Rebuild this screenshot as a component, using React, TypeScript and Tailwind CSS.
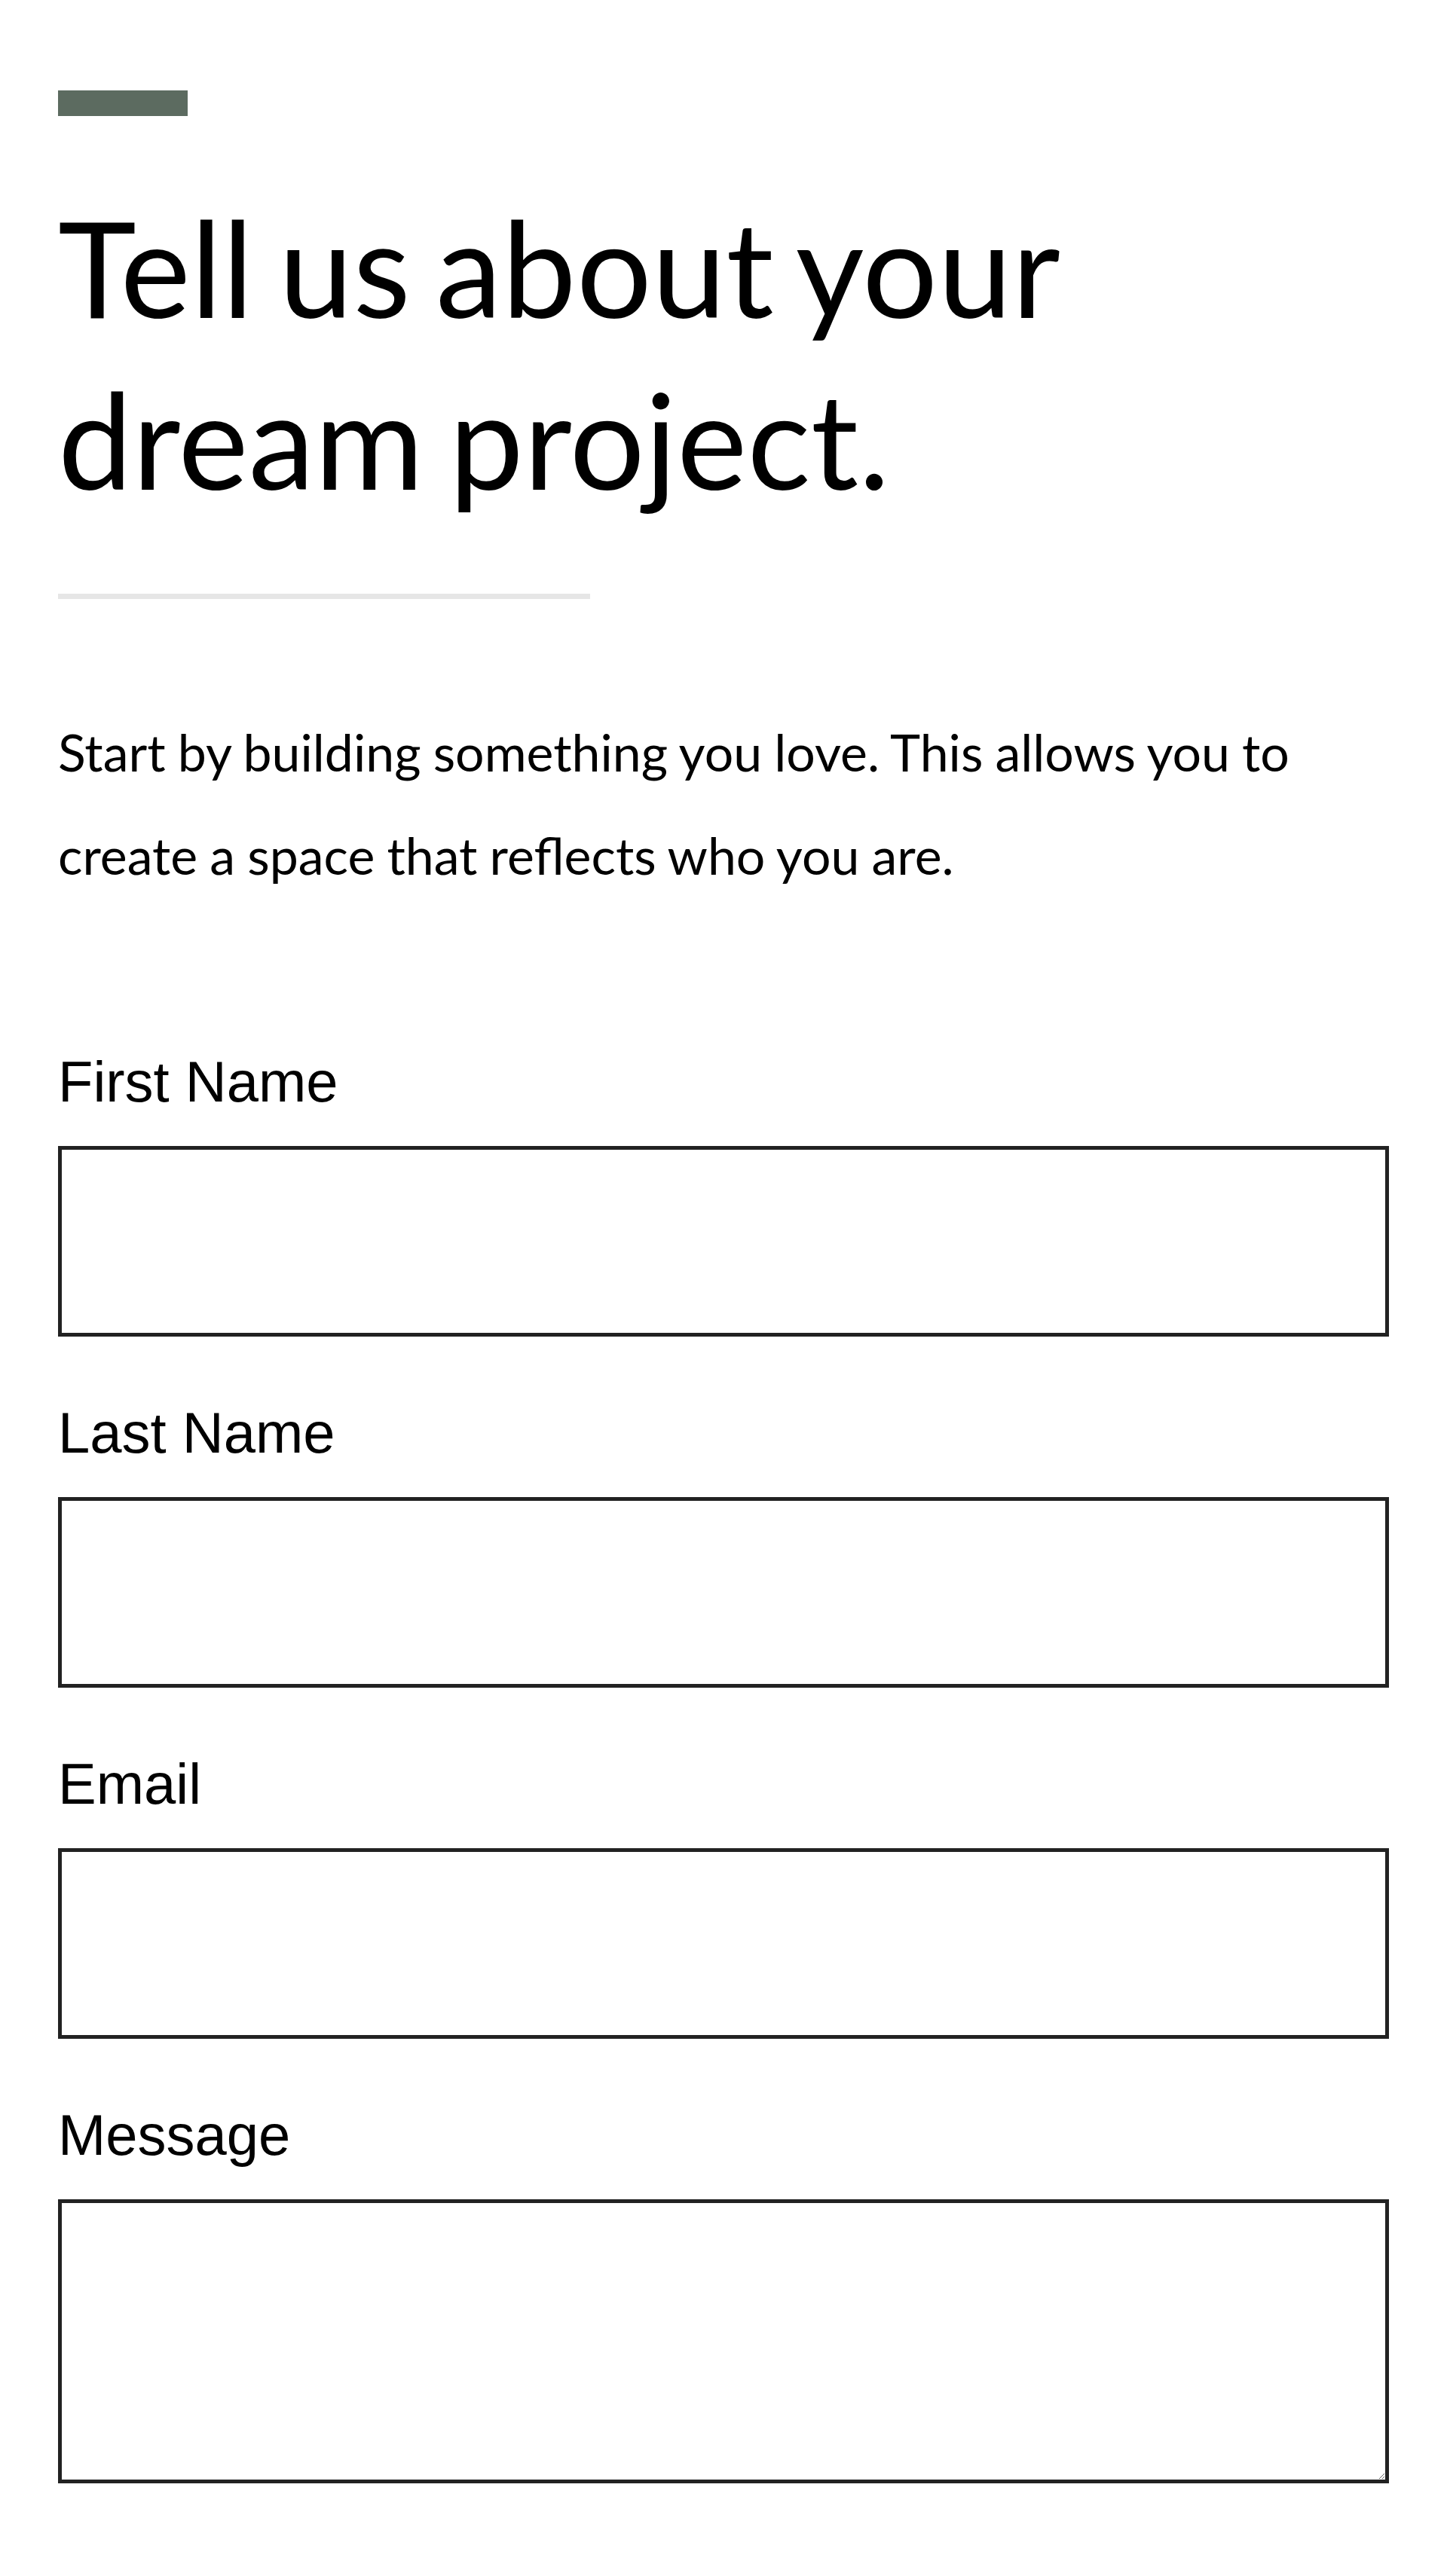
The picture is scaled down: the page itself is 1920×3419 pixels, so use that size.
export default function App() {
  const fields = [
    { label: "First Name", id: "first", type: "text" },
    { label: "Last Name", id: "last", type: "text" },
    { label: "Email", id: "email", type: "email" },
  ];

  return (
    <div className="bg-white min-h-screen px-[77px] pt-[120px] pb-[123px] text-black">
      {/* Accent bar */}
      <div className="w-[172px] h-[34px] bg-[#5c6b60]" />

      {/* Heading */}
      <h1 className="mt-[86px] font-['Lato',sans-serif] text-[176px] leading-[228px] font-normal tracking-[0.3px] [word-spacing:-12px]">
        Tell us about your
        <br />
        dream project.
      </h1>

      <div className="mt-[92px] w-[706px] h-[7px] bg-[#e6e6e6]" />

      <p className="mt-[134px] font-['Lato',sans-serif] text-[68px] leading-[137px] [word-spacing:-1.3px] w-[1700px]">
        Start by building something you love. This allows you to create a space that reflects who you are.
      </p>

      {/* Form */}
      <form className="mt-[189px] flex flex-col gap-[84px] font-['Liberation_Sans',Arial,sans-serif]">
        {fields.map((f) => (
          <div key={f.id} className="flex flex-col gap-[42px]">
            <label htmlFor={f.id} className="text-[76px] leading-[87px]">
              {f.label}
            </label>
            <input
              id={f.id}
              type={f.type}
              className="w-full h-[253px] border-[5px] border-[#222] bg-white outline-none"
            />
          </div>
        ))}
        <div className="flex flex-col gap-[42px]">
          <label htmlFor="message" className="text-[76px] leading-[87px]">
            Message
          </label>
          <textarea
            id="message"
            className="block w-full h-[377px] border-[5px] border-[#222] bg-white outline-none"
          />
        </div>
      </form>
    </div>
  );
}
